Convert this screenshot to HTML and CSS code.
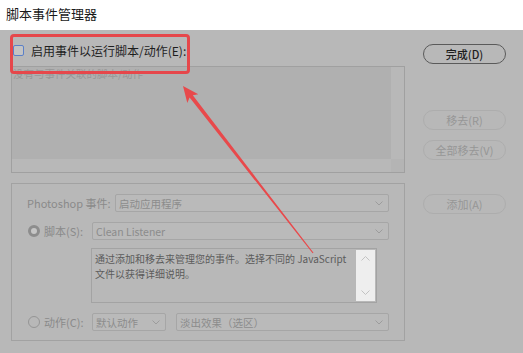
FILE: index.html
```html
<html>
<head>
  <link rel="stylesheet" href="styles.css">
</head>
<body>
<div class="titlebar">脚本事件管理器</div>

<div class="dialog">
  <div class="main">
    <div class="enableRow"><span class="checkbox"></span>启用事件以运行脚本/动作(E):</div>

    <div class="listBox">
      <div class="listArea">没有与事件关联的脚本/动作</div>
      <div class="listVScroll"></div>
      <div class="listHScroll"></div>
      <div class="listCorner"></div>
    </div>

    <div class="groupBox">
      <div class="fieldRow eventRow">
        <span class="fieldLabel eventLabel">Photoshop 事件:</span>
        <div class="select eventSelect">
          <span>启动应用程序</span>
          <svg class="chevron" width="8" height="5" viewBox="0 0 8 5"><polyline points="0.5,0.5 4,4 7.5,0.5"/></svg>
        </div>
      </div>

      <div class="fieldRow">
        <span class="radio radioOn"></span>
        <span class="fieldLabel">脚本(S):</span>
        <div class="select scriptSelect">
          <span>Clean Listener</span>
          <svg class="chevron" width="8" height="5" viewBox="0 0 8 5"><polyline points="0.5,0.5 4,4 7.5,0.5"/></svg>
        </div>
      </div>

      <div class="textBox">
        <div class="textBody">
          <div class="textLine">通过添加和移去来管理您的事件。选择不同的 JavaScript</div>
          <div class="textLine">文件以获得详细说明。</div>
        </div>
        <div class="textScroll">
          <svg width="9" height="5" viewBox="0 0 9 5"><polyline points="0.5,4.5 4.5,0.5 8.5,4.5"/></svg>
          <svg width="9" height="5" viewBox="0 0 9 5"><polyline points="0.5,0.5 4.5,4.5 8.5,0.5"/></svg>
        </div>
      </div>

      <div class="fieldRow">
        <span class="radio"></span>
        <span class="fieldLabel">动作(C):</span>
        <div class="select actionSet">
          <span>默认动作</span>
          <svg class="chevron" width="8" height="5" viewBox="0 0 8 5"><polyline points="0.5,0.5 4,4 7.5,0.5"/></svg>
        </div>
        <div class="select actionName">
          <span>淡出效果（选区）</span>
          <svg class="chevron" width="8" height="5" viewBox="0 0 8 5"><polyline points="0.5,0.5 4,4 7.5,0.5"/></svg>
        </div>
      </div>
    </div>
  </div>

  <div class="buttons">
    <div class="btn btnDone">完成(D)</div>
    <div class="btn btnOff btnRemove">移去(R)</div>
    <div class="btn btnOff btnRemoveAll">全部移去(V)</div>
    <div class="btn btnOff btnAdd">添加(A)</div>
  </div>
</div>

<div class="highlight"></div>
<svg class="arrow" width="523" height="353" viewBox="0 0 523 353">
  <polygon points="183,86 198.3,94.3 192.8,95.3 313.5,252.8 312.6,253.3 189.6,97.6 187.3,102.9"/>
</svg>
</body>
</html>
```

FILE: styles.css
```css
body {margin:0;width:523px;height:353px;overflow:hidden;position:relative;font-family:"Noto Sans CJK SC","Noto Sans",sans-serif;background:#b8b8b8;}

.titlebar {height:30px;line-height:28px;padding-left:6px;background:#fff;color:#1a1a1a;font-size:13px;}

.dialog {display:flex;height:323px;background:#b8b8b8;}
.main {width:394px;margin-left:11px;padding-top:10px;}

.enableRow {display:flex;align-items:center;height:20px;margin-bottom:6px;padding-left:2px;font-size:12px;color:#1e1e1e;}
.checkbox {width:9px;height:9px;border:1px solid #5b80c8;border-radius:2px;background:#c4c4c4;margin-right:7px;}

.listBox {box-sizing:border-box;height:107px;border:1px solid #a0a0a0;display:grid;grid-template-columns:379px 1fr;grid-template-rows:92px 1fr;}
.listArea {background:#b0b0b0;font-size:10.5px;color:#979797;padding:0 0 0 1px;line-height:14px;}
.listVScroll {background:#b8b8b8;}
.listHScroll {background:#b8b8b8;}
.listCorner {background:#b4b4b4;}

.groupBox {box-sizing:border-box;height:158px;margin-top:10px;border:1px solid #a2a2a2;}

.fieldRow {display:flex;align-items:center;height:18px;margin-top:10px;padding-left:16px;}
.eventRow {padding-left:15px;}
.fieldLabel {width:48px;font-size:11px;color:#8a8a8a;}
.eventLabel {width:88px;}
.radio {box-sizing:border-box;width:12px;height:12px;border:1px solid #959595;border-radius:50%;margin-right:4px;}
.radioOn {border:3px solid #8d8d8d;background:#c6c6c6;}

.select {box-sizing:border-box;height:18px;display:flex;align-items:center;justify-content:space-between;border:1px solid #a6a6a6;border-radius:2px;padding:0 5px 0 3px;background:#bababa;font-size:10.5px;color:#8c8c8c;}
.chevron polyline {fill:none;stroke:#9c9c9c;stroke-width:1;}
.eventSelect {width:274px;}
.scriptSelect {width:297px;}
.actionSet {width:74px;}
.actionName {width:213px;margin-left:10px;}

.textBox {box-sizing:border-box;display:flex;width:286px;height:55px;margin:8px 0 0 79px;border:1px solid #a3a3a3;padding:1px;}
.textBody {flex:1;font-size:10px;color:#5c5c5c;padding:1px 0 0 2px;overflow:hidden;}
.textLine {height:15px;line-height:15px;white-space:nowrap;}
.textScroll {width:19px;background:#eeeeee;display:flex;flex-direction:column;align-items:center;justify-content:space-between;padding:6px 0;box-sizing:border-box;}
.textScroll polyline {fill:none;stroke:#c2c2c2;stroke-width:1;}

.buttons {display:flex;flex-direction:column;margin-left:18px;padding-top:14px;}
.btn {box-sizing:border-box;width:83px;height:20px;border-radius:10px;display:flex;align-items:center;justify-content:center;font-size:11px;}
.btnDone {border:1px solid #5a5a5a;color:#1e1e1e;font-weight:500;}
.btnOff {border:1px solid #adadad;color:#969696;}
.btnRemove {margin-top:46px;}
.btnRemoveAll {margin-top:10px;}
.btnAdd {margin-top:34px;}

.highlight {position:absolute;left:10px;top:34px;width:174px;height:34px;border:3px solid #e6474b;border-radius:4px;}
.arrow {position:absolute;left:0;top:0;pointer-events:none;}
.arrow polygon {fill:#e8494b;}
```
